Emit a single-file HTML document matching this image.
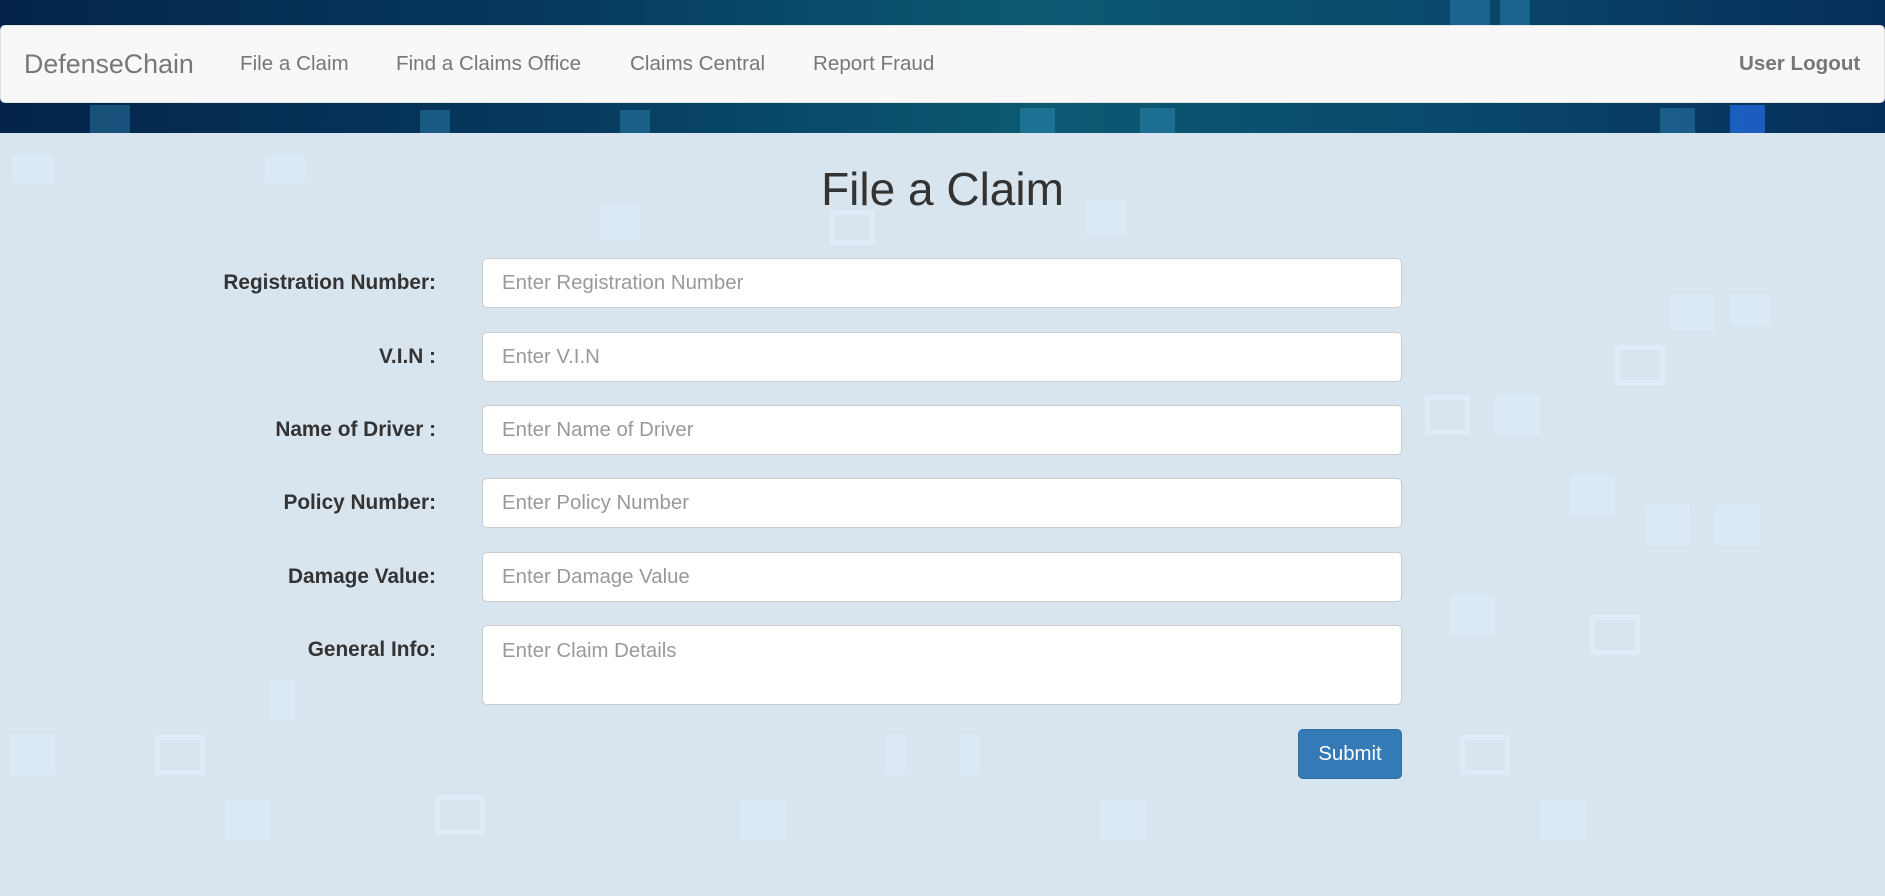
<!DOCTYPE html>
<html><head><meta charset="utf-8"><style>
*{box-sizing:border-box;margin:0;padding:0}
html,body{width:1885px;height:896px;overflow:hidden}
body{font-family:"Liberation Sans",Arial,sans-serif;background:#d9e5ee;position:relative}
.band{position:absolute;left:0;top:0;width:1885px;height:133px;background:linear-gradient(90deg,#04244a 0%,#063a5e 30%,#0b5a72 55%,#0a4a6e 75%,#062e5a 100%)}
.band i{position:absolute;background:rgba(60,160,210,.35)}
.sq{position:absolute;background:rgba(225,238,255,.45)}
.sqo{position:absolute;border:5px solid rgba(230,242,255,.45)}
.nav{position:absolute;left:0;top:25px;width:1885px;height:78px;background:#f8f8f8;border:1px solid #e3e3e3;border-radius:5px}
.nav span{position:absolute;top:0;line-height:76px;color:#777;font-size:20.6px}
h1{position:absolute;left:0;width:1885px;top:162px;text-align:center;font-size:46px;font-weight:400;color:#333}
label{position:absolute;right:1449px;font-weight:bold;font-size:20.8px;color:#333;text-align:right;white-space:nowrap}
.in{position:absolute;left:482px;width:920px;height:50px;background:#fff;border:1px solid #ccc;border-radius:5px;padding-left:19px;line-height:48px;font-size:20.4px;color:#999}
.btn{position:absolute;left:1298px;top:729px;width:104px;height:50px;background:#337ab7;border:1px solid #2e6da4;border-radius:5px;color:#fff;font-size:20.4px;text-align:center;line-height:48px}
</style></head><body>
<div class="band">
<i style="left:90px;top:105px;width:40px;height:28px"></i><i style="left:420px;top:110px;width:30px;height:23px"></i>
<i style="left:620px;top:110px;width:30px;height:23px"></i><i style="left:1020px;top:108px;width:35px;height:25px"></i>
<i style="left:1140px;top:108px;width:35px;height:25px"></i><i style="left:1660px;top:108px;width:35px;height:25px"></i>
<i style="left:1730px;top:105px;width:35px;height:28px;background:rgba(40,120,255,.6)"></i>
<i style="left:1450px;top:0;width:40px;height:25px"></i><i style="left:1500px;top:0;width:30px;height:25px"></i>
</div>
<div class="sq" style="left:12px;top:155px;width:42px;height:28px"></div>
<div class="sq" style="left:265px;top:155px;width:40px;height:28px"></div>
<div class="sq" style="left:600px;top:205px;width:40px;height:35px"></div>
<div class="sq" style="left:1085px;top:200px;width:40px;height:35px"></div>
<div class="sqo" style="left:830px;top:210px;width:45px;height:35px"></div>
<div class="sq" style="left:1670px;top:295px;width:45px;height:35px"></div>
<div class="sq" style="left:1730px;top:295px;width:40px;height:30px"></div>
<div class="sqo" style="left:1615px;top:345px;width:50px;height:40px"></div>
<div class="sqo" style="left:1425px;top:395px;width:45px;height:40px"></div>
<div class="sq" style="left:1495px;top:395px;width:45px;height:40px"></div>
<div class="sq" style="left:1570px;top:475px;width:45px;height:40px"></div>
<div class="sq" style="left:1645px;top:505px;width:45px;height:40px"></div>
<div class="sq" style="left:1715px;top:505px;width:45px;height:40px"></div>
<div class="sq" style="left:1450px;top:595px;width:45px;height:40px"></div>
<div class="sqo" style="left:1590px;top:615px;width:50px;height:40px"></div>
<div class="sq" style="left:10px;top:735px;width:45px;height:40px"></div>
<div class="sqo" style="left:155px;top:735px;width:50px;height:40px"></div>
<div class="sq" style="left:270px;top:680px;width:25px;height:40px"></div>
<div class="sq" style="left:885px;top:735px;width:20px;height:40px"></div>
<div class="sq" style="left:960px;top:735px;width:20px;height:40px"></div>
<div class="sq" style="left:1330px;top:735px;width:45px;height:40px"></div>
<div class="sqo" style="left:1460px;top:735px;width:50px;height:40px"></div>
<div class="sq" style="left:740px;top:800px;width:45px;height:40px"></div>
<div class="sq" style="left:1100px;top:800px;width:45px;height:40px"></div>
<div class="sqo" style="left:435px;top:795px;width:50px;height:40px"></div>
<div class="sq" style="left:225px;top:800px;width:45px;height:40px"></div>
<div class="sq" style="left:1540px;top:800px;width:45px;height:40px"></div>
<div class="nav">
<span style="left:23px;font-size:26.8px">DefenseChain</span>
<span style="left:239px">File a Claim</span>
<span style="left:395px">Find a Claims Office</span>
<span style="left:629px">Claims Central</span>
<span style="left:812px">Report Fraud</span>
<span style="left:1738px;font-weight:bold">User Logout</span>
</div>
<h1>File a Claim</h1>
<label style="top:271px">Registration Number:</label><div class="in" style="top:258px">Enter Registration Number</div>
<label style="top:345px">V.I.N :</label><div class="in" style="top:332px">Enter V.I.N</div>
<label style="top:418px">Name of Driver :</label><div class="in" style="top:405px">Enter Name of Driver</div>
<label style="top:491px">Policy Number:</label><div class="in" style="top:478px">Enter Policy Number</div>
<label style="top:565px">Damage Value:</label><div class="in" style="top:552px">Enter Damage Value</div>
<label style="top:638px">General Info:</label><div class="in" style="top:625px;height:80px;line-height:1;padding-top:15px">Enter Claim Details</div>
<div class="btn">Submit</div>
</body></html>
